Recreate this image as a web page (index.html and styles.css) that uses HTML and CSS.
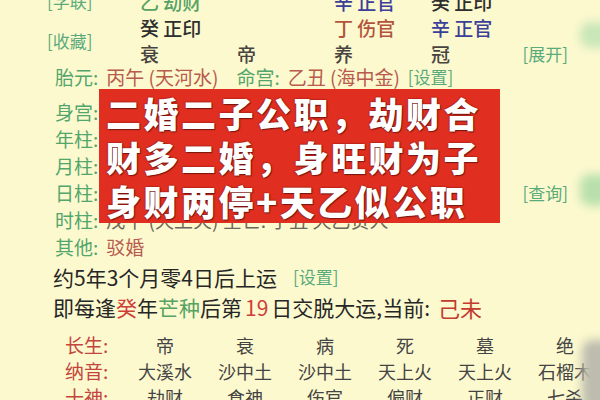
FILE: index.html
```html
<!DOCTYPE html>
<html lang="zh-CN">
<head>
<meta charset="utf-8">
<title>命盘</title>
<link rel="stylesheet" href="styles.css">
</head>
<body>
<div class="page">
  <section class="top">
    <div class="tools">
      <span class="btn">[学联]</span>
      <span class="btn">[收藏]</span>
    </div>
    <div class="pillars">
      <span class="c-green">乙 劫财</span><span></span><span class="c-blue">辛 正官</span><span class="c-dark">癸 正印</span>
      <span class="c-dark">癸 正印</span><span></span><span class="c-brown">丁 伤官</span><span class="c-blue">辛 正官</span>
      <span class="c-gray">衰</span><span class="c-gray">帝</span><span class="c-gray">养</span><span class="c-gray">冠</span>
    </div>
    <div class="tools-r"><span class="btn">[展开]</span></div>
  </section>

  <div class="info">
    <p class="row taiyuan"><span class="lbl">胎元:</span><span class="val">丙午 (天河水)</span><span class="lbl gap-l">命宫:</span><span class="val">乙丑 (海中金)</span><span class="btn">[设置]</span></p>
    <p class="row"><span class="lbl">身宫:</span><span class="txt">乙丑 (海中金)</span></p>
    <p class="row"><span class="lbl">年柱:</span><span class="txt">壬子 (桑柘木) 空亡: 寅卯</span></p>
    <p class="row"><span class="lbl">月柱:</span><span class="txt">丙午 (天河水) 空亡: 寅卯</span></p>
    <p class="row"><span class="lbl">日柱:</span><span class="txt">癸亥 (大海水) 空亡: 子丑</span><span class="btn right">[查询]</span></p>
    <p class="row"><span class="lbl">时柱:</span><span class="txt faint">戊午 (天上火) 空亡: 子丑 天乙贵人</span></p>
    <p class="row"><span class="lbl">其他:</span><span class="val">驳婚</span></p>
  </div>

  <p class="yun first">约5年3个月零4日后上运<span class="btn">[设置]</span></p>
  <p class="yun">即每逢<span class="c-red">癸</span>年<span class="c-green">芒种</span>后第<span class="c-red num">19</span>日交脱大运,当前: <span class="cur">己未</span></p>

  <div class="dayun">
    <span class="dl">长生:</span><span>帝</span><span>衰</span><span>病</span><span>死</span><span>墓</span><span>绝</span>
    <span class="dl">纳音:</span><span>大溪水</span><span>沙中土</span><span>沙中土</span><span>天上火</span><span>天上火</span><span>石榴木</span>
    <span class="dl">十神:</span><span>劫财</span><span>食神</span><span>伤官</span><span>偏财</span><span>正财</span><span>七杀</span>
  </div>
</div>

<div class="banner">
  <p>二婚二子公职，劫财合</p>
  <p>财多二婚，身旺财为子</p>
  <p>身财两停+天乙似公职</p>
</div>

<div class="blob blob-g1"></div>
<div class="blob blob-g2"></div>
<div class="blob blob-gray"></div>
</body>
</html>
```

FILE: styles.css
```css
html, body {
  margin: 0;
  padding: 0;
}
body {
  width: 600px;
  height: 400px;
  overflow: hidden;
  position: relative;
  background: #fcf9cf;
  font-family: "Noto Sans CJK SC", "Noto Sans", sans-serif;
  color: #333;
}
p { margin: 0; }

.c-green { color: #55a263; }
.c-blue { color: #3b3f99; }
.c-dark { color: #2e2e2e; }
.c-brown { color: #b4533c; }
.c-gray { color: #474440; }
.c-red { color: #cf3f3a; }

.btn {
  color: #5aab7b;
  font-size: 17px;
  line-height: 24px;
}

/* top pillar block */
.top {
  display: flex;
  margin-top: -11px;
}
.tools {
  width: 140px;
  box-sizing: border-box;
  padding-left: 47px;
  display: flex;
  flex-direction: column;
  gap: 16px;
}
.pillars {
  display: grid;
  grid-template-columns: 97px 97px 97px auto;
  font-size: 19px;
  line-height: 26px;
  font-weight: 500;
}
.tools-r {
  margin-left: auto;
  padding-right: 32px;
  align-self: flex-end;
  line-height: 26px;
}

/* info lines */
.info {
  padding-left: 55px;
  font-size: 19px;
}
.row {
  display: flex;
  align-items: center;
  gap: 8px;
  line-height: 27px;
  height: 27px;
  white-space: nowrap;
}
.taiyuan {
  margin-top: -3px;
  margin-bottom: 8px;
  height: 26px;
  line-height: 26px;
}
.gap-l { margin-left: 10px; }
.lbl { color: #52a66c; }
.val { color: #b85a4c; }
.txt { color: #3a3a3a; }
.faint { color: #6b675c; }
.right {
  margin-left: auto;
  padding-right: 32px;
}

/* dayun lines */
.yun {
  padding-left: 53px;
  font-size: 21px;
  line-height: 30px;
  color: #262626;
  display: flex;
  align-items: center;
  white-space: nowrap;
}
.yun.first { margin-top: 2px; }
.yun .btn { margin-left: 16px; }
.num { margin: 0 3px; }
.cur {
  color: #c33a2e;
  font-size: 22px;
  margin-left: 8px;
}

/* table */
.dayun {
  margin-top: 10px;
  padding-left: 65px;
  display: grid;
  grid-template-columns: 60px repeat(6, 80px);
  font-size: 18px;
  line-height: 26px;
  color: #444;
  text-align: center;
}
.dayun .dl {
  text-align: left;
  color: #c4453e;
  font-size: 19px;
}

/* overlay caption */
.banner {
  position: absolute;
  left: 99px;
  top: 89px;
  width: 401px;
  height: 134px;
  box-sizing: border-box;
  padding: 2px 0 0 7px;
  background: #e02f20;
  color: #fff;
  font-size: 35px;
  font-weight: 900;
  line-height: 44px;
  letter-spacing: 2.5px;
  white-space: nowrap;
  text-shadow: 0 0 2px rgba(80, 0, 0, 0.8), 1px 1px 1px rgba(0, 0, 0, 0.4);
}

.blob {
  position: absolute;
  filter: blur(5px);
  border-radius: 10px;
}
.blob-g1 {
  left: 580px;
  top: 22px;
  width: 30px;
  height: 26px;
  background: #c9e6b8;
}
.blob-g2 {
  left: 580px;
  top: 174px;
  width: 30px;
  height: 32px;
  background: #b9e0ac;
}
.blob-gray {
  left: 582px;
  top: 340px;
  width: 30px;
  height: 70px;
  background: #bdbcae;
}
```
